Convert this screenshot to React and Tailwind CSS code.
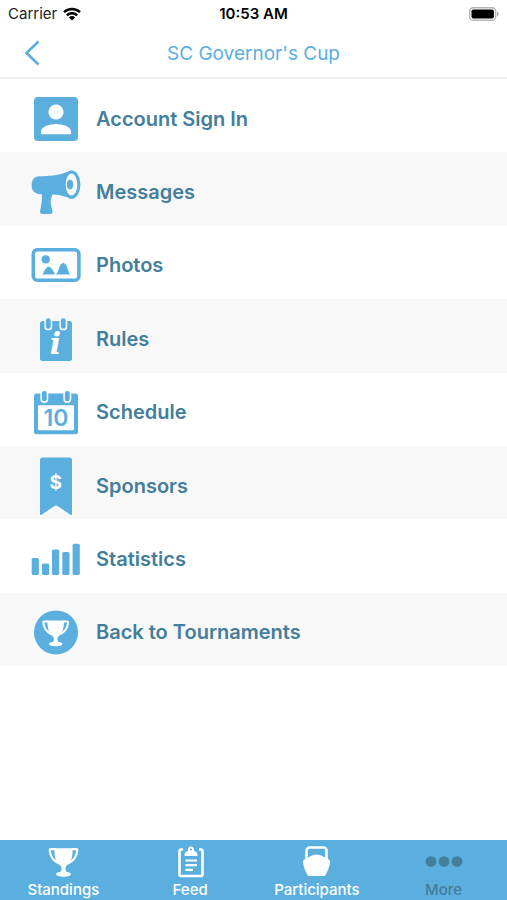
import React from "react";

const BLUE = "#5bafde";

function IconFrame({ children }) {
  return (
    <svg viewBox="0 0 50 60" className="h-[60px] w-[50px] shrink-0 fill-[#5bafde]" aria-hidden="true">
      {children}
    </svg>
  );
}

function AccountIcon() {
  return (
    <IconFrame>
      <rect x="3" y="8" width="44" height="44" rx="4" />
      <circle cx="25" cy="23" r="7.6" fill="#fff" />
      <path d="M10 45.3v-2.6c0-4.8 8-7.6 15-7.6s15 2.8 15 7.6v2.6z" fill="#fff" />
    </IconFrame>
  );
}

function MegaphoneIcon() {
  return (
    <IconFrame>
      <path d="M8 14.3C17 14.3 27 14 40.5 8.6V36.8C34 34 28 32.8 21.7 32.6c-1.6 3-2.3 5.8-2 8.4.3 2.8 1.2 4.7 1.8 8.6.2 1.6-.5 2.4-2 2.4h-8c-1.8 0-2.6-1-2.4-2.8.9-6 2.4-11 1.8-17C4.5 32.2.6 29 .6 23.4c0-5.4 3-9.1 7.4-9.1z" />
      <ellipse cx="40.6" cy="22.6" rx="8.8" ry="14.2" />
      <ellipse cx="40.5" cy="22.6" rx="5.8" ry="11" fill="#f8f8f8" />
      <ellipse cx="39" cy="22.6" rx="3.2" ry="4.8" />
    </IconFrame>
  );
}

function PhotoIcon() {
  return (
    <IconFrame>
      <rect x="2.3" y="14.8" width="45.6" height="30.4" rx="4" fill="none" stroke={BLUE} strokeWidth="3.6" />
      <circle cx="14.7" cy="24.4" r="4.1" />
      <path d="M11 39.6c1-.4 1.8-2.6 3-4.8 2-4 5.6-4 7.6 0 1 2.2 2 4.4 3 4.8z" />
      <path d="M24.8 39.6c1.2-.6 2.2-4 3.4-7.2 2-6 6-6 8 0 1.2 3.2 2 6.6 3.2 7.2z" />
    </IconFrame>
  );
}

function Ring({ x, y, background }) {
  return (
    <rect x={x - 3.2} y={y} width="6.4" height="12" rx="3.2" stroke={background} strokeWidth="1.5" />
  );
}

function RulesIcon() {
  return (
    <IconFrame>
      <rect x="9" y="12" width="32" height="40" rx="2.5" />
      <Ring x={17.3} y={8.6} background="#f8f8f8" />
      <Ring x={32.3} y={8.6} background="#f8f8f8" />
      <text x="24.5" y="45" textAnchor="middle" fill="#fff" className="font-['DejaVu_Serif','Liberation_Serif',serif] text-[30px] font-bold italic">i</text>
    </IconFrame>
  );
}

function ScheduleIcon() {
  return (
    <IconFrame>
      <rect x="3" y="11.6" width="44" height="40.6" rx="2.5" />
      <rect x="7" y="23.3" width="36" height="25" rx="1" fill="#fff" />
      <Ring x={13.3} y={8.2} background="#fff" />
      <Ring x={36.3} y={8.2} background="#fff" />
      <text x="25" y="44" textAnchor="middle" className="font-['Inter',sans-serif] text-[23px] font-semibold">10</text>
    </IconFrame>
  );
}

function SponsorIcon() {
  return (
    <IconFrame>
      <path d="M11.5 1.6h27A2.5 2.5 0 0 1 41 4.1v54c0 1-.8 1.2-1.5.6L26.5 50q-1.5-1-3 0L10.5 58.7c-.7.6-1.5.4-1.5-.6v-54a2.5 2.5 0 0 1 2.5-2.5z" />
      <text x="24.8" y="33" textAnchor="middle" fill="#fff" className="font-['Inter',sans-serif] text-[19px] font-bold">$</text>
    </IconFrame>
  );
}

function StatisticsIcon() {
  return (
    <IconFrame>
      <rect x="0.7" y="29" width="7.2" height="17" rx="1.5" />
      <rect x="11" y="34.4" width="7.2" height="11.6" rx="1.5" />
      <rect x="21" y="20.4" width="7.2" height="25.6" rx="1.5" />
      <rect x="31.3" y="23" width="7.2" height="23" rx="1.5" />
      <rect x="41.6" y="14.7" width="7.2" height="31.3" rx="1.5" />
    </IconFrame>
  );
}

function Cup() {
  return (
    <g>
      <path d="M5.8 1.2h18.4c0 8-1.2 13-4.7 16.4-1.3 1.2-2.2 2-2.4 3.2-.3 2 .1 3.2 1.3 4.2 2.5.4 4 1 4 2.3 0 1.5-3 2.5-7.4 2.5s-7.400-1-7.400-2.500c0-1.300 1.500-1.900 4-2.300 1.200-1 1.600-2.200 1.300-4.200-.2-1.200-1.100-2-2.400-3.200C7 14.200 5.800 9.200 5.800 1.200z" fill="#fff" />
      <path d="M7 2.2H2.2c-.8 0-1.1.5-1 1.2C1.8 9.5 5 14 10.5 16.5M23 2.2h4.8c.8 0 1.1.5 1 1.2-.6 6.1-3.8 10.6-9.3 13.1" fill="none" stroke="#fff" strokeWidth="2.2" />
    </g>
  );
}

function TournamentIcon() {
  return (
    <IconFrame>
      <circle cx="25" cy="30.4" r="22" />
      <g transform="translate(11.2 17.5) scale(0.9)">
        <Cup />
      </g>
    </IconFrame>
  );
}

const menu = [
  { label: "Account Sign In", Icon: AccountIcon },
  { label: "Messages", Icon: MegaphoneIcon },
  { label: "Photos", Icon: PhotoIcon },
  { label: "Rules", Icon: RulesIcon },
  { label: "Schedule", Icon: ScheduleIcon },
  { label: "Sponsors", Icon: SponsorIcon },
  { label: "Statistics", Icon: StatisticsIcon },
  { label: "Back to Tournaments", Icon: TournamentIcon },
];

function TabIcon({ children }) {
  return (
    <svg viewBox="0 0 40 32" className="h-8 w-10" aria-hidden="true">
      {children}
    </svg>
  );
}

function StandingsIcon() {
  return (
    <TabIcon>
      <g transform="translate(5.5 1)">
        <Cup />
      </g>
    </TabIcon>
  );
}

function FeedIcon() {
  return (
    <TabIcon>
      <path d="M13 3.5H11A1.5 1.5 0 0 0 9.5 5v23.5A1.5 1.5 0 0 0 11 30h20a1.5 1.5 0 0 0 1.5-1.5V5A1.5 1.5 0 0 0 31 3.5h-2" fill="none" stroke="#fff" strokeWidth="2.6" />
      <path fillRule="evenodd" d="M14.5 10c0-3 .8-4.5 3.5-5V3.5C18 1.5 19.5.5 21 .5s3 1 3 3V5c2.7.5 3.5 2 3.5 5zM21 2.4a1.1 1.1 0 1 0 0 2.2 1.1 1.1 0 0 0 0-2.2z" fill="#fff" />
      <path d="M15.5 14.5h11.5M15.5 19.2h11.5M15.5 23.8h7.5" fill="none" stroke="#fff" strokeWidth="2.2" />
    </TabIcon>
  );
}

function KettlebellIcon() {
  return (
    <TabIcon>
      <path d="M9.5 15V4.5a3 3 0 0 1 3-3h14a3 3 0 0 1 3 3V15" fill="none" stroke="#fff" strokeWidth="2.6" />
      <path d="M19.5 8.5c2 0 4 .9 6 1.7l5.5 2.9c1.6.8 2.3 2 2 3.7-.7 4.3-2.2 8.2-4.2 11.7-.6 1-1.4 1.5-2.7 1.5H12.9c-1.3 0-2.1-.5-2.7-1.5-2-3.5-3.5-7.4-4.2-11.7-.3-1.7.4-2.9 2-3.7l5.5-2.9c2-.8 4-1.7 6-1.7z" fill="#fff" />
    </TabIcon>
  );
}

function MoreIcon() {
  return (
    <TabIcon>
      <circle cx="7" cy="15.5" r="5.3" fill="#437e9c" />
      <circle cx="20" cy="15.5" r="5.3" fill="#437e9c" />
      <circle cx="33" cy="15.5" r="5.3" fill="#437e9c" />
    </TabIcon>
  );
}

const tabs = [
  { label: "Standings", Icon: StandingsIcon },
  { label: "Feed", Icon: FeedIcon },
  { label: "Participants", Icon: KettlebellIcon },
  { label: "More", Icon: MoreIcon, current: true },
];

function StatusBar() {
  return (
    <div className="grid h-7 grid-cols-3 items-center px-2 text-[15px] leading-5 text-black">
      <div className="flex items-center gap-1.5 text-[#222]">
        <span>Carrier</span>
        <svg viewBox="0 0 18 14" className="h-3.5 w-[18px]" aria-label="Wi-Fi">
          <path d="M1 5.2a11.5 11.5 0 0 1 16 0M3.9 8.3a7.3 7.3 0 0 1 10.2 0" fill="none" stroke="#000" strokeWidth="2.5" />
          <path d="M9 13.6 5.9 10.4a4.5 4.5 0 0 1 6.2 0z" />
        </svg>
      </div>
      <span className="text-center font-semibold">10:53 AM</span>
      <svg viewBox="0 0 30 14" className="h-3.5 w-[30px] justify-self-end" aria-label="Battery full">
        <rect x="0.7" y="0.7" width="26" height="12.6" rx="3.6" fill="#fff" stroke="#b5b5b5" strokeWidth="1.4" />
        <rect x="2.5" y="2.5" width="22.4" height="9" rx="1.8" />
        <path d="M28 4.7c2.2.6 2.2 4 0 4.6z" fill="#aaa" />
      </svg>
    </div>
  );
}

export default function App() {
  return (
    <div className="flex min-h-screen flex-col bg-white font-['Inter',sans-serif]">
      <header>
        <StatusBar />
        <div className="grid h-[51px] grid-cols-[64px_1fr_64px] items-center border-b-2 border-[#eeeeee]">
          <button type="button" aria-label="Back" className="flex h-full items-center pl-6">
            <svg viewBox="0 0 16 26" className="h-[26px] w-4" aria-hidden="true">
              <path d="M14.5 1.5 2.5 13l12 11.5" fill="none" stroke={BLUE} strokeWidth="2.6" />
            </svg>
          </button>
          <h1 className="pt-0.5 text-center text-[19px] leading-6 text-[#5bafde]">SC Governor's Cup</h1>
        </div>
      </header>
      <main className="flex-1">
        <ul className="grid min-h-[587px] auto-rows-fr">
          {menu.map(({ label, Icon }) => (
            <li key={label} className="odd:bg-white even:bg-[#f8f8f8]">
              <a href="#" className="flex h-full items-center gap-[15px] pt-1.5 pl-[31px] text-[20px] leading-6 font-semibold text-[#437e9c]">
                <Icon />
                <span>{label}</span>
              </a>
            </li>
          ))}
        </ul>
      </main>
      <nav className="grid h-[60px] grid-cols-4 bg-[#5bafde]">
        {tabs.map(({ label, Icon, current }) => (
          <a
            key={label}
            href="#"
            aria-current={current ? "page" : undefined}
            className="flex flex-col items-center gap-1 pt-1.5 text-[15px] leading-4 font-medium text-white aria-[current=page]:text-[#437e9c]"
          >
            <Icon />
            <span>{label}</span>
          </a>
        ))}
      </nav>
    </div>
  );
}
